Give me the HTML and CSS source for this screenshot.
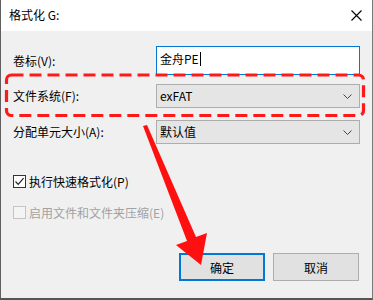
FILE: index.html
```html
<!DOCTYPE html>
<html>
<head>
<meta charset="utf-8">
<link rel="stylesheet" href="styles.css">
</head>
<body>
<div class="window">
  <div class="titlebar">
    <span class="title">格式化 G:</span>
    <svg class="close" width="11" height="11" viewBox="0 0 11 11"><path d="M0.5 0.5L10.5 10.5M10.5 0.5L0.5 10.5" stroke="#000" stroke-width="1.1" fill="none"/></svg>
  </div>
  <div class="content">
    <div class="row r1">
      <span class="label">卷标(V):</span>
      <div class="textbox"><span class="value">金舟PE</span><span class="caret"></span></div>
    </div>
    <div class="row r2">
      <span class="label">文件系统(F):</span>
      <div class="combo"><span class="value">exFAT</span><svg class="chev" width="9" height="5" viewBox="0 0 9 5"><path d="M0.5 0.5L4.5 4.5L8.5 0.5" stroke="#444" stroke-width="1" fill="none"/></svg></div>
    </div>
    <div class="row r3">
      <span class="label">分配单元大小(A):</span>
      <div class="combo"><span class="value">默认值</span><svg class="chev" width="9" height="5" viewBox="0 0 9 5"><path d="M0.5 0.5L4.5 4.5L8.5 0.5" stroke="#444" stroke-width="1" fill="none"/></svg></div>
    </div>
    <div class="check c1">
      <span class="box"><svg width="11" height="11" viewBox="0 0 11 11"><path d="M1.5 5.5L4.2 8.3L9.6 2.2" stroke="#222" stroke-width="1.2" fill="none"/></svg></span>
      <span class="ctext">执行快速格式化(P)</span>
    </div>
    <div class="check c2 disabled">
      <span class="box"></span>
      <span class="ctext">启用文件和文件夹压缩(E)</span>
    </div>
    <div class="buttons">
      <button class="btn default">确定</button>
      <button class="btn">取消</button>
    </div>
  </div>
  <svg class="overlay" width="373" height="300" viewBox="0 0 373 300">
    <rect x="6.5" y="75" width="357" height="40.5" rx="5" ry="5" fill="none" stroke="#ff1a1a" stroke-width="3.2" stroke-dasharray="12 6"/>
    <polygon points="143,126 147,125 196,237 207,233 201,265 176,245 187,241" fill="#ff1010"/>
  </svg>
</div>
</body>
</html>
```

FILE: styles.css
```css
html, body {
  margin: 0;
  padding: 0;
  background: #f0f0f0;
}
body {
  font-family: "Noto Sans CJK SC", "Noto Sans", sans-serif;
  font-size: 12px;
  color: #000;
}
.window {
  position: relative;
  width: 371px;
  height: 298px;
  border-left: 1px solid #5f5f5f;
  border-right: 1px solid #7a7a7a;
  border-bottom: 2px solid #555;
  background: #f0f0f0;
  overflow: hidden;
}
.titlebar {
  height: 31px;
  background: #fff;
  display: flex;
  align-items: center;
  justify-content: space-between;
  padding: 0 9px 2px 8px;
  box-sizing: border-box;
}
.title {
  font-size: 12px;
  line-height: 14px;
}
.close {
  display: block;
  margin-right: 1px;
  margin-top: 1px;
}
.content {
  padding: 15px 12px 0 12px;
}
.row {
  display: flex;
  align-items: center;
}
.label {
  width: 143px;
  line-height: 14px;
}
.r1 { height: 29px; }
.r2 { height: 24px; margin-top: 9px; }
.r3 { height: 24px; margin-top: 12px; }
.textbox {
  width: 204px;
  height: 29px;
  box-sizing: border-box;
  border: 1px solid #0078d7;
  background: #fff;
  display: flex;
  align-items: flex-start;
  padding: 4px 0 0 3px;
}
.textbox .value {
  line-height: 16px;
}
.caret {
  display: inline-block;
  width: 0;
  height: 14px;
  border-left: 1px solid #000;
  margin-left: 1px;
  margin-top: 1px;
}
.combo {
  width: 204px;
  height: 24px;
  box-sizing: border-box;
  border: 1px solid #adadad;
  background: #e5e5e5;
  display: flex;
  align-items: center;
  justify-content: space-between;
  padding: 0 7px 0 3px;
}
.combo .value { line-height: 14px; }
.chev { display: block; }
.check {
  display: flex;
  align-items: center;
  height: 13px;
}
.c1 { margin-top: 31px; }
.c2 { margin-top: 18px; }
.box {
  width: 13px;
  height: 13px;
  box-sizing: border-box;
  border: 1px solid #333;
  background: #fff;
  display: flex;
  align-items: center;
  justify-content: center;
}
.box svg { display: block; }
.ctext {
  margin-left: 3px;
  line-height: 14px;
}
.disabled .box {
  border-color: #c4c4c4;
  background: #f4f4f4;
}
.disabled .ctext { color: #a2a2a2; }
.buttons {
  display: flex;
  justify-content: flex-end;
  gap: 8px;
  margin-top: 34px;
  margin-right: 1px;
}
.btn {
  width: 86px;
  height: 28px;
  box-sizing: border-box;
  border: 1px solid #adadad;
  background: #e1e1e1;
  font-family: "Noto Sans CJK SC", "Noto Sans", sans-serif;
  font-size: 12px;
  color: #000;
  padding: 0;
  margin: 0;
}
.btn.default {
  border: 2px solid #0078d7;
}
.overlay {
  position: absolute;
  left: -1px;
  top: 0;
  pointer-events: none;
}
```
